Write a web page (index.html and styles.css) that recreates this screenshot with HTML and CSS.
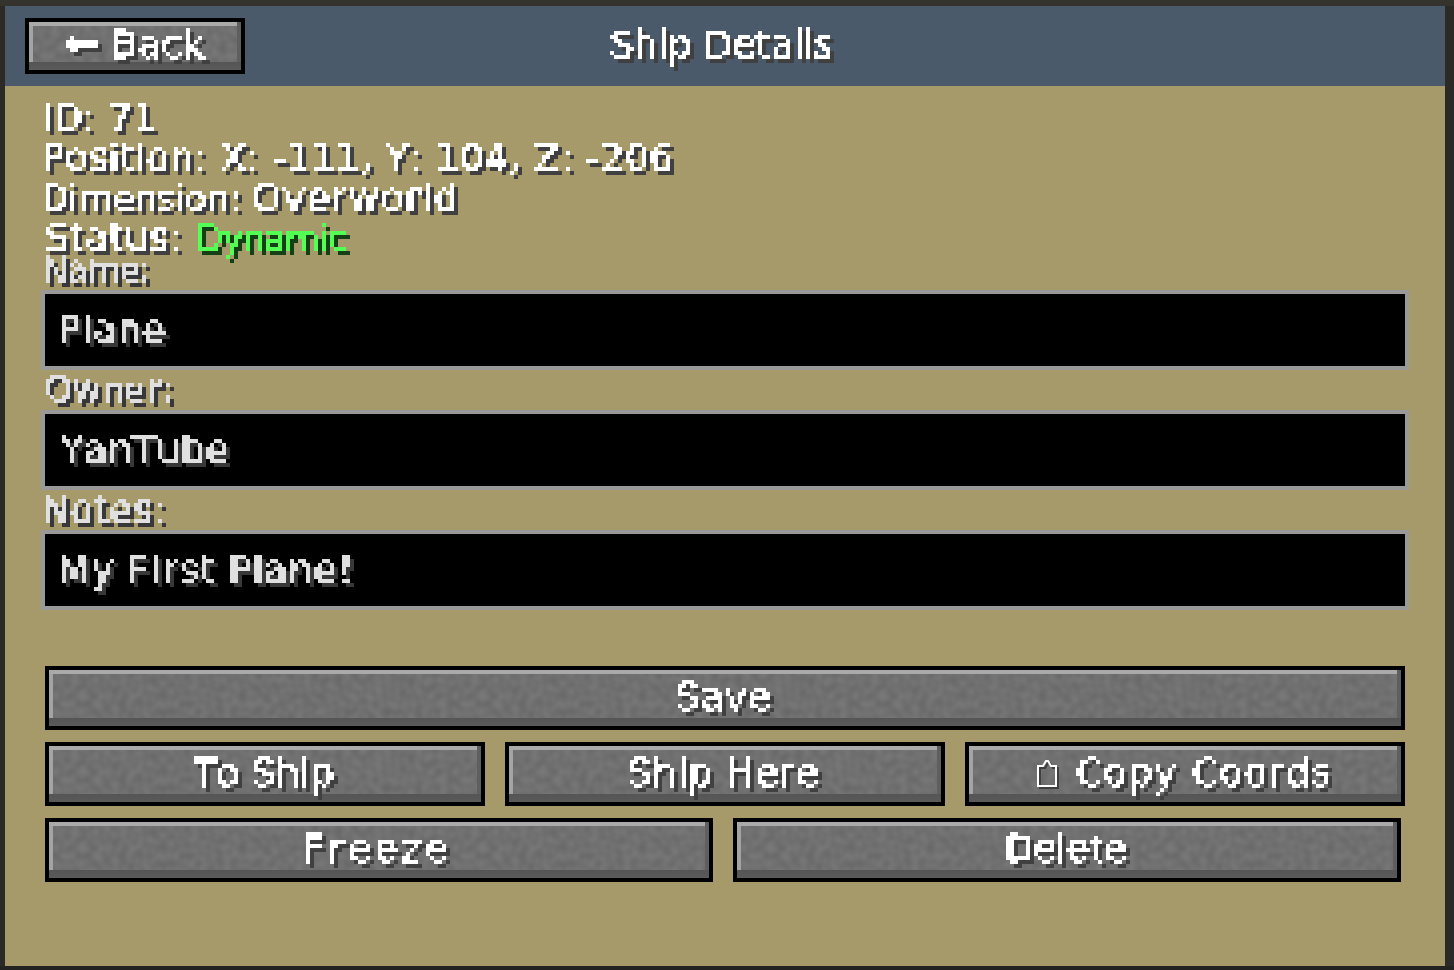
FILE: index.html
```html
<!DOCTYPE html>
<html lang="en">
<head>
<meta charset="utf-8">
<title>Ship Details</title>
<link rel="stylesheet" href="styles.css">
</head>
<body>
<svg class="defs" width="0" height="0" aria-hidden="true">
  <filter id="pixel" x="0" y="0" width="100%" height="130%" color-interpolation-filters="sRGB">
    <feFlood x="2" y="2" width="1" height="1" flood-color="#fff"/>
    <feComposite width="4" height="4"/>
    <feTile result="grid"/>
    <feComposite in="SourceGraphic" in2="grid" operator="in"/>
    <feComponentTransfer>
      <feFuncA type="discrete" tableValues="0 1"/>
    </feComponentTransfer>
    <feConvolveMatrix order="4" divisor="1" targetX="2" targetY="2" preserveAlpha="false" kernelMatrix="1 1 1 1 1 1 1 1 1 1 1 1 1 1 1 1" result="face"/>
    <feOffset dx="4" dy="4"/>
    <feColorMatrix type="matrix" values="0.25 0 0 0 0 0 0.25 0 0 0 0 0 0.25 0 0 0 0 0 1 0" result="shade"/>
    <feMerge>
      <feMergeNode in="shade"/>
      <feMergeNode in="face"/>
    </feMerge>
  </filter>
</svg>
<main class="panel">
  <header class="topbar">
    <button class="btn back" type="button"><span class="label ls-back"><span class="arrow">←</span> Back</span></button>
    <h1 class="title">Ship Details</h1>
  </header>
  <section class="info">
    <div class="line ls-id">ID: 71</div>
    <div class="line ls-pos">Position: X: -111, Y: 104, Z: -206</div>
    <div class="line"><span class="ls-dim">Dimension: </span><span class="ls-world">Overworld</span></div>
    <div class="line ls-status">Status: <span class="green">Dynamic</span></div>
  </section>
  <section class="fields">
    <div class="flabel ls-name">Name:</div>
    <div class="field"><div class="value ls-plane">Plane</div></div>
    <div class="flabel ls-owner">Owner:</div>
    <div class="field"><div class="value ls-yan">YanTube</div></div>
    <div class="flabel ls-notes">Notes:</div>
    <div class="field"><div class="value ls-first">My First Plane!</div></div>
  </section>
  <section class="actions">
    <div class="row"><button class="btn full" type="button"><span class="label ls-btn">Save</span></button></div>
    <div class="row">
      <button class="btn third" type="button"><span class="label ls-ship">To Ship</span></button>
      <button class="btn third" type="button"><span class="label ls-btn">Ship Here</span></button>
      <button class="btn third copy" type="button">
        <svg class="clip" width="26" height="32" viewBox="0 0 26 32" aria-hidden="true">
          <path class="clip-shade" d="M4 9h5l3-5h2l3 5h5v20H4z"/>
          <path class="clip-line" d="M2 7h5l3-5h2l3 5h5v20H2z"/>
        </svg>
        <span class="label ls-copy">Copy Coords</span>
      </button>
    </div>
    <div class="row">
      <button class="btn half" type="button"><span class="label ls-freeze">Freeze</span></button>
      <button class="btn half" type="button"><span class="label ls-delete">Delete</span></button>
    </div>
  </section>
</main>
</body>
</html>
```
FILE: styles.css
```css
* { box-sizing: border-box; }
html, body { margin: 0; height: 970px; overflow: hidden; }
body {
  padding: 6px 0 0 5px;
  background: linear-gradient(#35332d 0 6px, #2c2a26 6px 966px, #232322 966px);
  font-family: "DejaVu Sans", sans-serif;
  font-size: 38px;
  font-kerning: none;
  color: #fff;
}
.defs { position: absolute; }
.panel { width: 1440px; height: 960px; background: #a69a6a; }

.topbar {
  display: flex;
  height: 80px;
  padding: 12px 0 0 20px;
  background: #4a5a6a;
}
.title {
  width: 952px;
  height: 56px;
  margin: 0;
  font: inherit;
  font-kerning: none;
  line-height: 52px;
  text-align: center;
  filter: url(#pixel);
  -webkit-text-stroke: 1px #fff;
  letter-spacing: -.25px;
}

.btn {
  display: flex;
  align-items: center;
  justify-content: center;
  height: 64px;
  padding: 0;
  border: 4px solid #000;
  color: #fff;
  font: inherit;
  font-kerning: none;
  background:
    linear-gradient(#aaa, #aaa) left top / calc(100% - 4px) 4px no-repeat,
    linear-gradient(#a4a4a4, #a4a4a4) left top / 4px calc(100% - 8px) no-repeat,
    linear-gradient(#555, #5a5a5a) left bottom / 100% 8px no-repeat,
    linear-gradient(#5f5f5f, #5f5f5f) right top / 4px 100% no-repeat,
    url("data:image/svg+xml,%3Csvg xmlns='http://www.w3.org/2000/svg' width='400' height='64' viewBox='0 0 100 16'%3E%3Cfilter id='n' x='0' y='0' width='100%25' height='100%25' color-interpolation-filters='sRGB'%3E%3CfeTurbulence type='fractalNoise' baseFrequency='.5' numOctaves='1' seed='4' stitchTiles='stitch'/%3E%3CfeColorMatrix type='matrix' values='.1 0 0 0 .39 .1 0 0 0 .39 .1 0 0 0 .39 0 0 0 0 1'/%3E%3C/filter%3E%3Crect width='100' height='16' filter='url(%23n)'/%3E%3C/svg%3E");
}
.back { width: 220px; height: 56px; flex: none; }
.full { width: 1360px; }
.third { width: 440px; }
.half { width: 668px; }

.label {
  display: block;
  width: 100%;
  height: 44px;
  margin-top: -2px;
  padding-right: 4px;
  line-height: 42px;
  text-align: center;
  white-space: pre;
  filter: url(#pixel);
  -webkit-text-stroke: 1px #fff;
}
.arrow { font-size: 44px; line-height: 20px; letter-spacing: 0; }
.copy { justify-content: flex-start; padding-left: 67px; }
.copy .label { width: 300px; margin-left: 13px; text-align: left; }
.clip { flex: none; margin-top: 2px; }
.clip-line, .clip-shade { fill: none; stroke-width: 2px; }
.clip-line { stroke: #fff; }
.clip-shade { stroke: #3f3f3f; }

.info { padding: 12px 0 0 36px; }
.line {
  height: 40px;
  line-height: 38px;
  white-space: pre;
  filter: url(#pixel);
  -webkit-text-stroke: 1px #fff;
}
.green { color: #55ff55; -webkit-text-stroke: 1px #55ff55; font-size: 35px; letter-spacing: -.6px; }

.fields { margin-top: -8px; padding-left: 36px; }
.flabel {
  height: 40px;
  line-height: 38px;
  color: #e0e0e0;
  filter: url(#pixel);
  -webkit-text-stroke: 1px #e0e0e0;
}
.field {
  width: 1368px;
  height: 80px;
  padding: 0 12px;
  border: 4px solid #999;
  background: #000;
}
.value {
  height: 72px;
  line-height: 70px;
  color: #e0e0e0;
  filter: url(#pixel);
  -webkit-text-stroke: 1px #e0e0e0;
}

.actions {
  display: flex;
  flex-direction: column;
  gap: 12px;
  margin-top: 56px;
  padding-left: 40px;
}
.row { display: flex; gap: 20px; }

.ls-back { letter-spacing: 0; }
.ls-id { letter-spacing: .3px; }
.ls-pos { letter-spacing: .45px; }
.ls-dim { font-size: 35px; letter-spacing: .1px; }
.ls-world { letter-spacing: 1.3px; }
.ls-status { padding-left: 3px; letter-spacing: .7px; }
.ls-name { font-size: 35px; letter-spacing: -1.5px; }
.ls-owner { padding-left: 3px; font-size: 35px; letter-spacing: .4px; }
.ls-notes { letter-spacing: .3px; }
.ls-plane { letter-spacing: 1px; }
.ls-btn { letter-spacing: .6px; }
.ls-ship { letter-spacing: 0; }
.ls-yan { padding-left: 3px; letter-spacing: .5px; }
.ls-first { letter-spacing: 1px; }
.ls-copy { letter-spacing: 1.5px; }
.ls-freeze { letter-spacing: 3.5px; }
.ls-delete { letter-spacing: -.5px; }
```
